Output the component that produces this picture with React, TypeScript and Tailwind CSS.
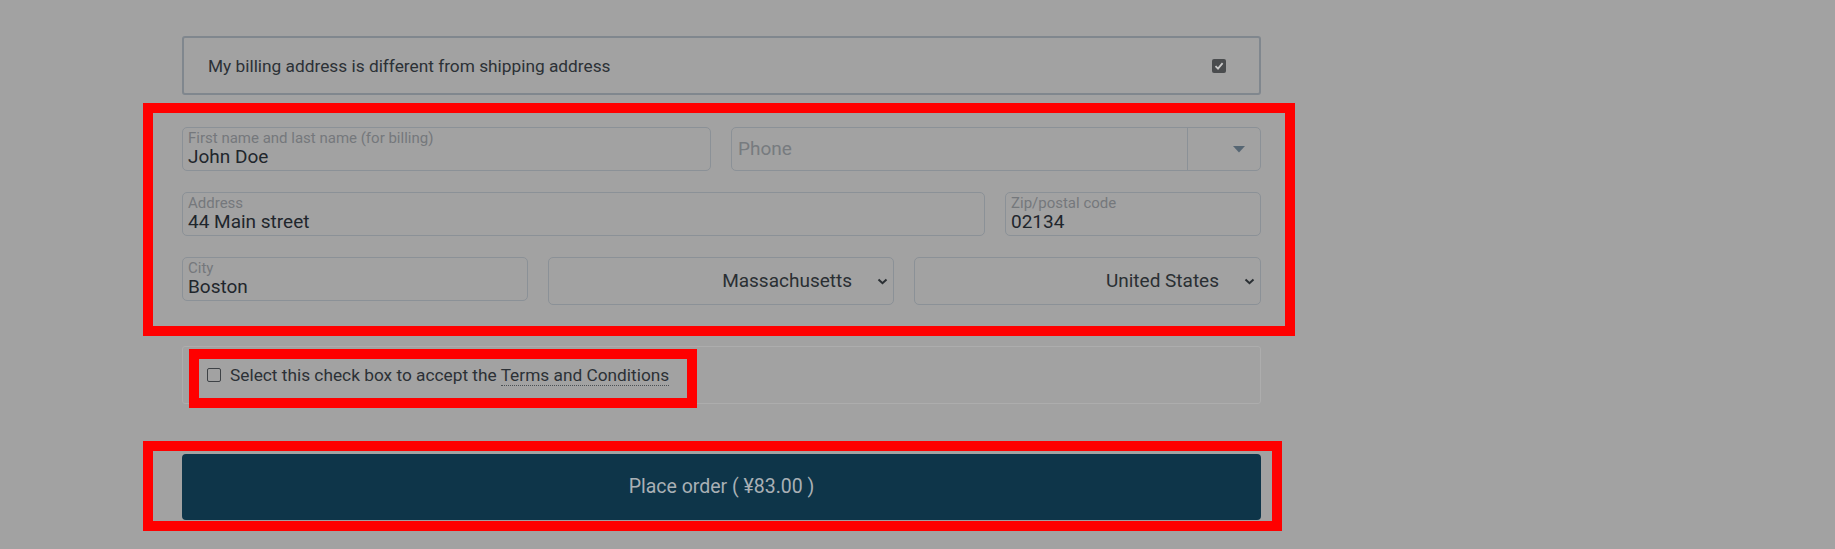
import React from 'react';

const font = { fontFamily: 'Roboto, "Liberation Sans", sans-serif' };

const Chevron = () => (
  <svg width="11" height="7" viewBox="0 0 11 7" className="shrink-0">
    <path d="M1.5 1.5 L5.5 5.2 L9.5 1.5" fill="none" stroke="#2a2f33" strokeWidth="2" />
  </svg>
);

const LabeledInput: React.FC<{ label: string; value: string; className?: string }> = ({ label, value, className }) => (
  <div className={`h-[44px] flex flex-col border border-[#8b9197] rounded-[5px] px-[5px] pt-[2px] ${className ?? ''}`}>
    <span className="text-[15px] leading-[16px] text-[#75787c]">{label}</span>
    <span className="text-[19px] leading-[22px] text-[#1f262c]">{value}</span>
  </div>
);

const FakeSelect: React.FC<{ value: string; className?: string }> = ({ value, className }) => (
  <div className={`h-[48px] flex items-center justify-end gap-[25px] border border-[#8b9197] rounded-[5px] pr-[5px] ${className ?? ''}`}>
    <span className="text-[19px] text-[#2a2f33]">{value}</span>
    <Chevron />
  </div>
);

const App: React.FC = () => {
  return (
    <div className="w-[1835px] h-[549px] bg-[#a2a2a2] overflow-hidden" style={font}>
      <div className="relative ml-[182px] w-[1079px] pt-[36px] flex flex-col">
        {/* Billing toggle */}
        <div className="h-[59px] flex items-center justify-between border-2 border-[#80878e] rounded-[3px] pl-[24px] pr-[33px]">
          <span className="mt-[3px] text-[17.3px] text-[#2c3136]">My billing address is different from shipping address</span>
          <span className="w-[14px] h-[14px] rounded-[2px] bg-[#4a4c4e] flex items-center justify-center">
            <svg width="10" height="10" viewBox="0 0 10 10">
              <path d="M1.5 5.2 L4 7.6 L8.6 2.2" fill="none" stroke="#c9c9c9" strokeWidth="1.8" />
            </svg>
          </span>
        </div>

        {/* Billing fields */}
        <div className="mt-[32px] flex flex-col gap-[21px]">
          <div className="flex justify-between">
            <LabeledInput className="w-[529px]" label="First name and last name (for billing)" value="John Doe" />
            <div className="w-[530px] h-[44px] flex border border-[#8b9197] rounded-[5px]">
              <span className="flex-1 flex items-center pl-[6px] text-[19px] text-[#777b7f]">Phone</span>
              <span className="w-[73px] border-l border-[#8b9197] flex items-center justify-center">
                <svg width="12" height="7" viewBox="0 0 12 7" className="ml-[30px]">
                  <path d="M0 0 H12 L6 6.5 Z" fill="#566673" />
                </svg>
              </span>
            </div>
          </div>
          <div className="flex justify-between">
            <LabeledInput className="w-[803px]" label="Address" value="44 Main street" />
            <LabeledInput className="w-[256px]" label="Zip/postal code" value="02134" />
          </div>
          <div className="flex gap-[20px] items-start">
            <LabeledInput className="w-[346px]" label="City" value="Boston" />
            <FakeSelect className="w-[346px]" value="Massachusetts" />
            <FakeSelect className="flex-1" value="United States" />
          </div>
        </div>

        {/* Terms */}
        <div className="mt-[41px] h-[58px] flex items-center border border-[#adadad] rounded-[3px] pl-[24px] gap-[9px]">
          <span className="w-[14px] h-[14px] rounded-[2px] border border-[#3e4246]" />
          <span className="mt-[1px] text-[17.3px] text-[#2c3136]">
            Select this check box to accept the{' '}
            <span className="border-b border-dotted border-[#4a4f54]">Terms and Conditions</span>
          </span>
        </div>

        {/* Place order */}
        <button className="mt-[50px] h-[66px] w-full rounded-[4px] bg-[#0e3549] text-[19.5px] text-[#a9b0b5]">
          Place order ( ¥83.00 )
        </button>

        {/* Annotation boxes */}
        <div className="pointer-events-none absolute left-[-39px] top-[103px] w-[1152px] h-[233px] border-[10px] border-[#ff0000]" />
        <div className="pointer-events-none absolute left-[7px] top-[349px] w-[508px] h-[59px] border-[10px] border-[#ff0000]" />
        <div className="pointer-events-none absolute left-[-39px] top-[441px] w-[1139px] h-[90px] border-[10px] border-[#ff0000]" />
      </div>
    </div>
  );
};

export default App;
